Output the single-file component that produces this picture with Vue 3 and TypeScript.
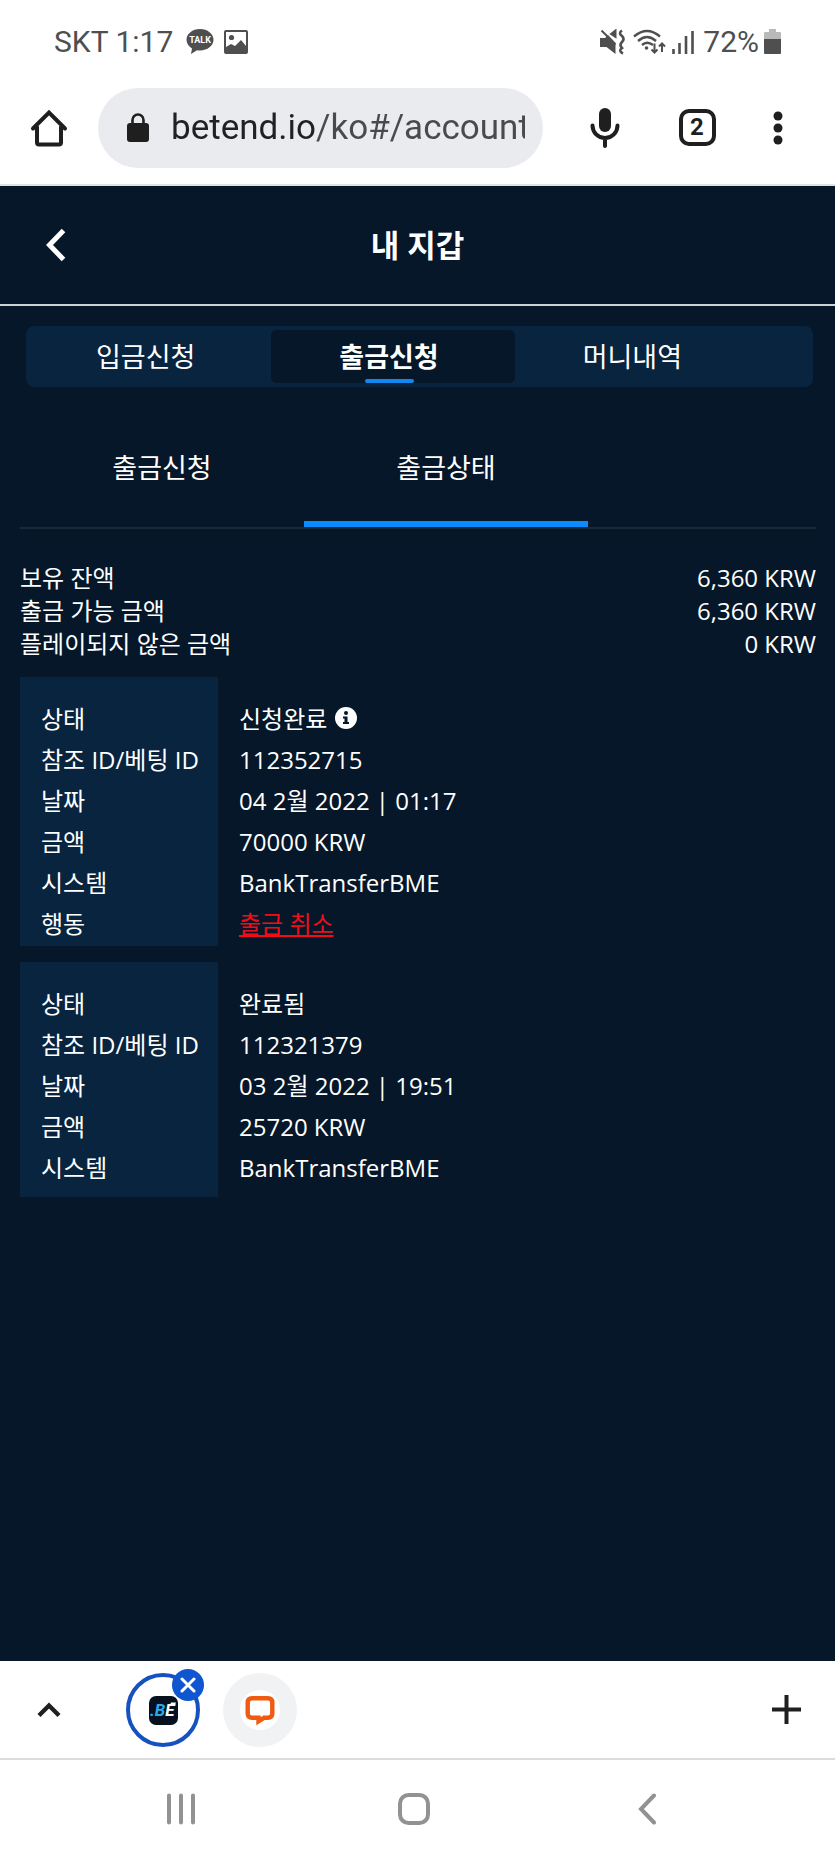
<script setup lang="ts">
import { ref } from 'vue'

interface Row {
  label: string
  value: string
  info?: boolean
  cancel?: boolean
}

interface Transaction {
  id: string
  rows: Row[]
}

const url = ref('betend.io/ko#/account')

const tabs = ['입금신청', '출금신청', '머니내역']
const activeTab = ref(1)

const subTabs = ['출금신청', '출금상태']
const activeSubTab = ref(1)

const balances = [
  { label: '보유 잔액', value: '6,360 KRW' },
  { label: '출금 가능 금액', value: '6,360 KRW' },
  { label: '플레이되지 않은 금액', value: '0 KRW' },
]

const transactions: Transaction[] = [
  {
    id: '112352715',
    rows: [
      { label: '상태', value: '신청완료', info: true },
      { label: '참조 ID/베팅 ID', value: '112352715' },
      { label: '날짜', value: '04 2월 2022 | 01:17' },
      { label: '금액', value: '70000 KRW' },
      { label: '시스템', value: 'BankTransferBME' },
      { label: '행동', value: '출금 취소', cancel: true },
    ],
  },
  {
    id: '112321379',
    rows: [
      { label: '상태', value: '완료됨' },
      { label: '참조 ID/베팅 ID', value: '112321379' },
      { label: '날짜', value: '03 2월 2022 | 19:51' },
      { label: '금액', value: '25720 KRW' },
      { label: '시스템', value: 'BankTransferBME' },
    ],
  },
]
</script>

<template>
  <div class="screen">
    <div class="status">
      <span class="status-text">SKT 1:17</span>
      <svg class="talk" width="28" height="28" viewBox="0 0 28 28" aria-hidden="true">
        <path d="M14 1C6.5 1 .5 5.800.5 11.800c0 3.600 2.200 6.700 5.500 8.700L5 26l6-3.700c1 .2 2 .2 3 .2 7.500 0 13.500-4.700 13.500-10.700S21.500 1 14 1z" fill="#4f4f4f" />
        <text x="14" y="15" text-anchor="middle" font-size="9" font-weight="700" fill="#fff">TALK</text>
      </svg>
      <svg class="photo" width="24" height="24" viewBox="0 0 24 24" aria-hidden="true">
        <rect x="1" y="1" width="22" height="22" rx="1" fill="none" stroke="#4f4f4f" stroke-width="2" />
        <circle cx="7.500" cy="7.500" r="2.600" fill="#4f4f4f" />
        <path d="M2 17l5-3 4 2 6-6 5 6v6H2z" fill="#4f4f4f" />
      </svg>
      <div class="status-right">
        <svg width="26" height="26" viewBox="0 0 26 26" aria-hidden="true">
          <path d="M0 9h5l3-3 7.500 8v11L6.500 18H0z" fill="#4f4f4f" />
          <path d="M1.500 1.500l14 14M11 5l4.500-3.500V8z" stroke="#4f4f4f" stroke-width="2" fill="#4f4f4f" />
          <path d="M22 1.500q-4 2.500 0 5.500 3 3 0 6t0 6q-4 3 1 5.500" fill="none" stroke="#4f4f4f" stroke-width="2.600" />
        </svg>
        <svg class="wifi" width="33" height="26" viewBox="0 0 33 26" aria-hidden="true">
          <g fill="none" stroke="#4f4f4f" stroke-width="2.400">
            <path d="M1 7.500q13-11 26 0M5 12q9-8 18 0M9 16q5-4.500 11 0" />
            <path d="M21.500 14.500V23M18.500 20.500l3 3 3-3M29 23v-8M26 17.500l3-3 3 3" stroke-width="2" />
          </g>
          <circle cx="13.500" cy="19" r="1.800" fill="#4f4f4f" />
        </svg>
        <svg class="signal" width="22" height="26" viewBox="0 0 22 26" aria-hidden="true">
          <path d="M1.500 20v5M7.500 14v11M14 7v18M20.500 2v23" stroke="#4f4f4f" stroke-width="2.600" />
        </svg>
        <span class="status-text">72%</span>
        <svg class="battery" width="17" height="26" viewBox="0 0 17 26" aria-hidden="true">
          <path d="M5 0h7v3h4q1 0 1 1v7H0V4q0-1 1-1h4z" fill="#b9b9b9" />
          <path d="M0 10h17v14q0 1-1 1H1q-1 0-1-1z" fill="#4f4f4f" />
        </svg>
      </div>
    </div>

    <div class="toolbar">
      <button class="home" aria-label="Home">
        <svg width="38" height="38" viewBox="0 0 38 38">
          <path d="M7 18v15.500q0 2 2 2h20q2 0 2-2V18M3 19.500L19 3.500l16 16" fill="none" stroke="#1f1f1f" stroke-width="4" stroke-linecap="round" />
        </svg>
      </button>
      <label class="address">
        <svg width="22" height="30" viewBox="0 0 22 30" aria-hidden="true">
          <rect y="10" width="22" height="19" rx="3" fill="#1f1f1f" />
          <path d="M5.500 11V7a5.500 5.500 0 0 1 11 0v4" fill="none" stroke="#1f1f1f" stroke-width="2.600" />
        </svg>
        <input v-model="url" type="text" aria-label="URL" spellcheck="false" />
      </label>
      <button class="mic" aria-label="Voice search">
        <svg width="30" height="42" viewBox="0 0 30 42">
          <rect x="9" y="1" width="12" height="24" rx="6" fill="#1f1f1f" />
          <path d="M2.500 18.500a12.500 12.500 0 0 0 25 0M15 31v8" fill="none" stroke="#1f1f1f" stroke-width="4" stroke-linecap="round" />
        </svg>
      </button>
      <button class="count" aria-label="Open tabs"><span>2</span></button>
      <button class="more" aria-label="More">
        <svg width="10" height="34" viewBox="0 0 10 34">
          <g fill="#1f1f1f"><circle cx="5" cy="5" r="4.500" /><circle cx="5" cy="17" r="4.500" /><circle cx="5" cy="29" r="4.500" /></g>
        </svg>
      </button>
    </div>

    <main class="page">
      <header class="header">
        <button class="back" aria-label="Back">
          <svg width="20" height="34" viewBox="0 0 20 34">
            <path d="M17.500 2.500L3.500 17l14 14.500" fill="none" stroke="#fff" stroke-width="5" />
          </svg>
        </button>
        <h1>내 지갑</h1>
      </header>

      <nav class="tabs">
        <button
          v-for="(tab, i) in tabs"
          :key="tab"
          :class="{ active: i === activeTab }"
          @click="activeTab = i"
        >
          <span>{{ tab }}</span>
        </button>
      </nav>

      <div class="content">
        <nav class="sub-tabs">
          <button
            v-for="(tab, i) in subTabs"
            :key="tab"
            :class="{ active: i === activeSubTab }"
            @click="activeSubTab = i"
          >
            {{ tab }}
          </button>
        </nav>

        <dl class="balances">
          <div v-for="item in balances" :key="item.label">
            <dt>{{ item.label }}</dt>
            <dd>{{ item.value }}</dd>
          </div>
        </dl>

        <table v-for="item in transactions" :key="item.id" class="transaction">
          <tbody>
            <tr v-for="row in item.rows" :key="row.label" :class="{ action: row.cancel }">
              <th scope="row">{{ row.label }}</th>
              <td>
                <a v-if="row.cancel" href="#cancel">{{ row.value }}</a>
                <span v-else>{{ row.value }}</span>
                <svg v-if="row.info" class="info" width="22" height="22" viewBox="0 0 22 22" aria-hidden="true">
                  <circle cx="11" cy="11" r="11" fill="#fff" />
                  <circle cx="11" cy="6" r="2" fill="#051728" />
                  <path d="M8 9.500h4.500V15H14v2H8v-2h1.500v-3.500H8z" fill="#051728" />
                </svg>
              </td>
            </tr>
          </tbody>
        </table>
      </div>
    </main>

    <div class="strip">
      <button class="expand" aria-label="Expand tabs">
        <svg width="26" height="18" viewBox="0 0 26 18">
          <path d="M3 14.500l10-10 10 10" fill="none" stroke="#1f1f1f" stroke-width="4.400" />
        </svg>
      </button>
      <div class="current">
        <button class="site selected" aria-label="Betend">
          <svg width="30" height="30" viewBox="0 0 30 30">
            <rect x="1" y="1" width="29" height="29" rx="7" fill="#06101f" />
            <text x="2" y="21" font-size="17" font-weight="700" font-style="italic"><tspan fill="#2aa9ec">.B</tspan><tspan fill="#fff">E</tspan></text>
            <path d="M22 10l1-2.500h5L27 10z" fill="#fff" />
          </svg>
        </button>
        <button class="close" aria-label="Close tab">
          <svg width="16" height="16" viewBox="0 0 16 16">
            <path d="M2 2l12 12M14 2L2 14" stroke="#fff" stroke-width="3" stroke-linecap="round" />
          </svg>
        </button>
      </div>
      <button class="site chat" aria-label="Chat">
        <svg width="40" height="40" viewBox="0 0 40 40">
          <circle cx="20" cy="20" r="20" fill="#fff" />
          <path d="M12 8.200h16q4.300 0 4.300 4.300v11q0 4.300-4.300 4.300h-4l-5.500 3.500v-3.500H12q-4.300 0-4.300-4.300v-11q0-4.300 4.300-4.300z" fill="none" stroke="#ee5b11" stroke-width="4.400" />
        </svg>
      </button>
      <button class="new" aria-label="New tab">
        <svg width="29" height="29" viewBox="0 0 29 29">
          <path d="M14.500 0v29M0 14.500h29" stroke="#1f1f1f" stroke-width="4" />
        </svg>
      </button>
    </div>

    <nav class="system">
      <button aria-label="Recents">
        <svg width="32" height="32" viewBox="0 0 32 32">
          <path d="M4 2.500v27M16 2.500v27M28 2.500v27" stroke="#929292" stroke-width="4" stroke-linecap="round" />
        </svg>
      </button>
      <button aria-label="Home screen">
        <svg width="34" height="34" viewBox="0 0 34 34">
          <rect x="3" y="3" width="28" height="28" rx="8.500" fill="none" stroke="#929292" stroke-width="4" />
        </svg>
      </button>
      <button aria-label="System back">
        <svg width="20" height="32" viewBox="0 0 20 32">
          <path d="M17 2.500L4 16l13 13.500" fill="none" stroke="#929292" stroke-width="4" stroke-linecap="round" />
        </svg>
      </button>
    </nav>
  </div>
</template>

<style>
body {
  margin: 0;
  background: #fff;
}
</style>

<style scoped>
* {
  box-sizing: border-box;
}
button,
input {
  margin: 0;
  padding: 0;
  border: 0;
  background: none;
  color: inherit;
  font: inherit;
}
svg {
  display: block;
  flex: none;
}
.screen {
  display: flex;
  flex-direction: column;
  min-height: 100vh;
  font-family: Roboto, "Noto Sans CJK KR", sans-serif;
}

.status {
  display: flex;
  align-items: center;
  height: 84px;
  padding: 0 54px;
  color: #4f4f4f;
}
.status-text {
  font-size: 30px;
  line-height: 36px;
}
.talk {
  margin-left: 13px;
}
.photo {
  margin-left: 10px;
}
.status-right {
  display: flex;
  align-items: center;
  margin-left: auto;
}
.wifi {
  margin-left: 7px;
}
.signal {
  margin: 0 9px 0 6px;
}
.battery {
  margin-left: 5px;
}

.toolbar {
  display: flex;
  align-items: center;
  height: 102px;
  padding: 2px 6px 15px 0;
  border-bottom: 2px solid #dfe3e6;
}
.toolbar button {
  display: flex;
  align-items: center;
  justify-content: center;
  height: 80px;
}
.toolbar .home {
  width: 98px;
}
.toolbar .mic {
  width: 124px;
}
.toolbar .count {
  width: 60px;
}
.toolbar .more {
  width: 102px;
}
.count span {
  width: 37px;
  height: 37px;
  border: 4px solid #1f1f1f;
  border-radius: 10px;
  color: #1f1f1f;
  font-size: 24px;
  font-weight: 700;
  line-height: 29px;
}
.address {
  display: flex;
  flex: 1;
  align-items: center;
  min-width: 0;
  height: 80px;
  padding: 0 18px 0 29px;
  border-radius: 40px;
  background: #eaebef;
}
.address input {
  flex: 1;
  min-width: 0;
  height: 48px;
  margin-left: 22px;
  outline: none;
  background: linear-gradient(90deg, #202124 145px, #484a4e 145px);
  background-clip: text;
  color: transparent;
  font-size: 35px;
}

.page {
  flex: 1;
  background: #051728;
  color: #fff;
  font-family: "Open Sans", "Noto Sans CJK KR", sans-serif;
}
.header {
  display: grid;
  grid-template-columns: 112px 1fr 112px;
  align-items: center;
  height: 120px;
  border-bottom: 2px solid #cfd2d5;
}
.back {
  display: flex;
  justify-content: center;
}
.header h1 {
  margin: 0;
  font-size: 31px;
  font-weight: 700;
  line-height: 44px;
  text-align: center;
}
.tabs {
  display: flex;
  margin: 20px 22px 0 26px;
  padding: 4px 0 4px 2px;
  border-radius: 8px;
  background: #08243f;
}
.tabs button {
  display: flex;
  flex: 0 0 31%;
  flex-direction: column;
  align-items: center;
  height: 53px;
  padding: 7px 8px 0 0;
  border-radius: 6px;
  font-size: 27px;
  line-height: 40px;
}
.tabs .active {
  background: #051728;
  font-weight: 700;
}
.tabs .active::after {
  width: 49px;
  height: 4px;
  margin-top: 2px;
  border-radius: 2px;
  background: #1287f0;
  content: "";
}

.content {
  padding: 33px 19px 33px 20px;
  font-size: 24px;
}
.sub-tabs {
  display: flex;
  height: 109px;
  border-bottom: 2px solid #1b2a39;
}
.sub-tabs button {
  flex: 0 0 284px;
  padding-bottom: 8px;
  border-bottom: 6px solid transparent;
  font-size: 27px;
}
.sub-tabs .active {
  border-color: #0a8bff;
}
.balances {
  margin: 32px 0 17px;
  line-height: 33px;
}
.balances div {
  display: flex;
  justify-content: space-between;
}
.balances dd {
  margin: 0;
}

.transaction {
  width: 100%;
  margin-bottom: 16px;
  border-spacing: 0;
  table-layout: fixed;
  line-height: 41px;
}
.transaction th {
  width: 198px;
  padding: 0 0 0 21px;
  background: #08243f;
  font-weight: 400;
  text-align: left;
  white-space: nowrap;
}
.transaction td {
  padding: 0 0 0 21px;
}
.transaction tr:first-child > * {
  padding-top: 21px;
}
.transaction tr:last-child > * {
  padding-bottom: 9px;
}
.transaction tr.action > * {
  padding-bottom: 2px;
}
.transaction a {
  color: #f00c18;
  text-decoration: underline;
}
.info {
  display: inline-block;
  margin-left: 8px;
  vertical-align: -1px;
}

.strip {
  display: flex;
  align-items: center;
  height: 99px;
  padding-right: 34px;
  border-bottom: 2px solid #dcdcdc;
}
.expand {
  display: flex;
  justify-content: center;
  width: 98px;
}
.current {
  position: relative;
  margin-left: 28px;
}
.site {
  display: flex;
  align-items: center;
  justify-content: center;
  width: 74px;
  height: 74px;
  border-radius: 50%;
}
.selected {
  border: 4px solid #1552c0;
}
.close {
  position: absolute;
  top: -4px;
  right: -4px;
  display: flex;
  align-items: center;
  justify-content: center;
  width: 32px;
  height: 32px;
  border-radius: 50%;
  background: #0f56d0;
}
.chat {
  margin-left: 23px;
  background: #f1f2f4;
}
.new {
  margin-left: auto;
}

.system {
  display: grid;
  grid-template-columns: repeat(3, 1fr);
  height: 96px;
  padding: 2px 72px 0 64px;
}
.system button {
  display: flex;
  align-items: center;
  justify-content: center;
}
</style>
